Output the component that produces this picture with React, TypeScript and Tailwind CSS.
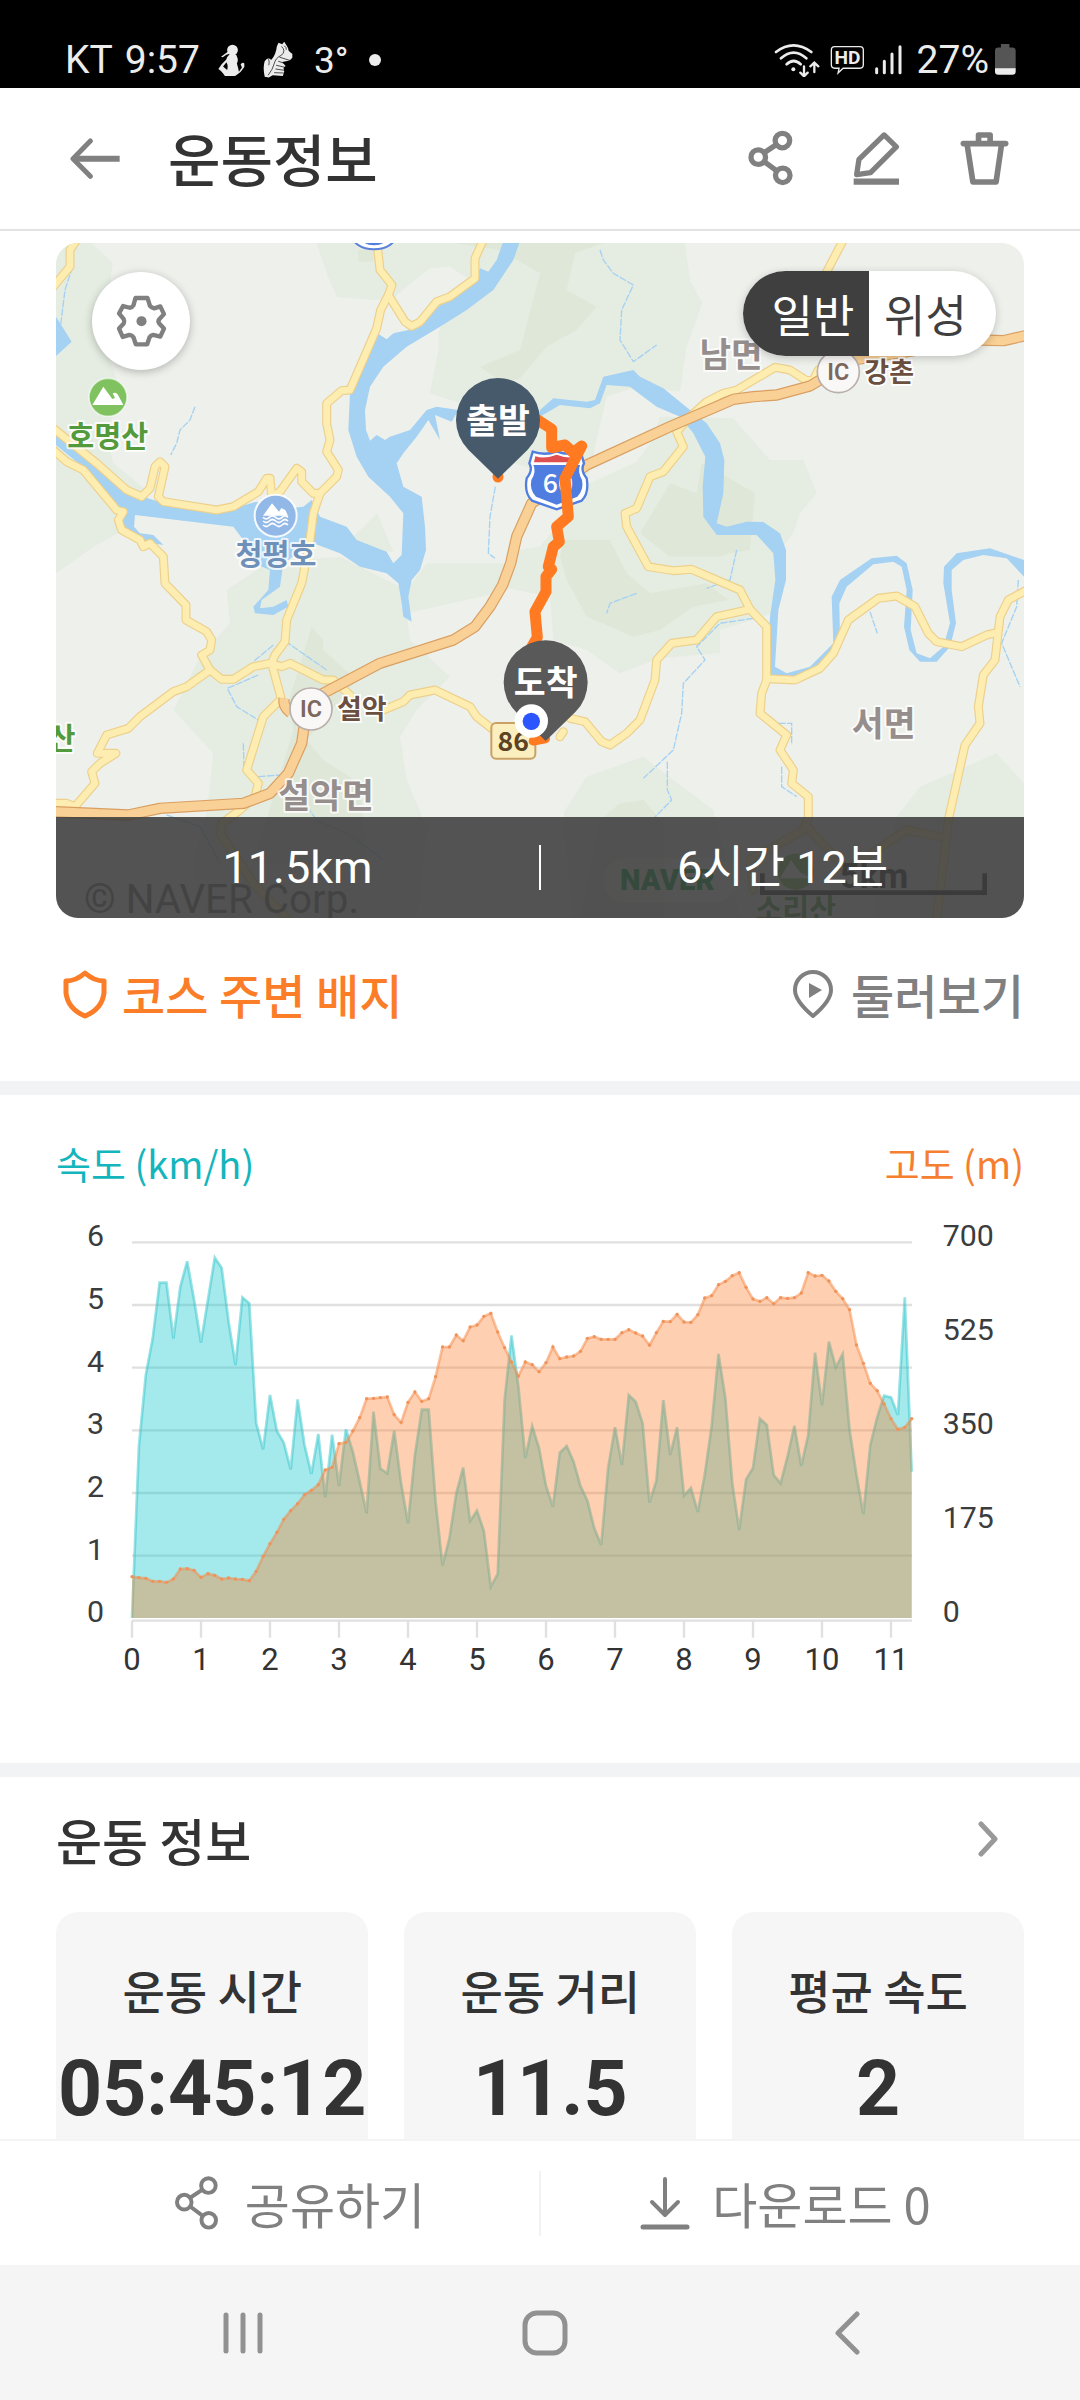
import React from "react";

const KR = "font-['Noto_Sans_CJK_KR',sans-serif]";
const ROBOTO = "font-['Roboto','Noto_Sans_CJK_KR',sans-serif]";

/* ---------- icons ---------- */

function ShareIcon({ className, width = 14 }: { className: string; width?: number }) {
  return (
    <svg viewBox="-2 -1 136 170" className={className} fill="none" stroke="currentColor" strokeWidth={width} aria-hidden="true">
      <circle cx="29" cy="81" r="22" />
      <circle cx="102" cy="31" r="22" />
      <circle cx="103" cy="136" r="22" />
      <path d="M48 67 84 43M48 95l36 27" />
    </svg>
  );
}

function BackArrow() {
  return (
    <svg viewBox="0 0 150 124" className="w-[50px]" fill="none" stroke="currentColor" strokeWidth="15" aria-hidden="true">
      <path d="M149 62H10" strokeWidth="18" />
      <path d="M61 9 9 62l52 53" strokeLinecap="round" strokeLinejoin="round" />
    </svg>
  );
}

function EditIcon() {
  return (
    <svg viewBox="372 320 142 166" className="w-[47px]" fill="none" stroke="currentColor" strokeWidth="16" strokeLinejoin="round" aria-hidden="true">
      <path d="M466 332 503 368 425 446 383 452 390 406Z" />
      <path d="M374 473H511" strokeWidth="19" />
    </svg>
  );
}

function TrashIcon() {
  return (
    <svg viewBox="690 320 148 166" className="w-[49px]" fill="none" stroke="currentColor" strokeWidth="17" strokeLinejoin="round" aria-hidden="true">
      <path d="M700 358H828" strokeLinecap="round" />
      <path d="M746 356V332H781V356" strokeLinecap="round" />
      <path d="M712 364 729 474H799L815 364" />
    </svg>
  );
}

function GearIcon() {
  return (
    <svg viewBox="226 196 152 156" className="w-[51px]" fill="none" stroke="currentColor" strokeWidth="13" strokeLinejoin="round" aria-hidden="true">
      <path d="M284 205H320L327 228Q332 234 340 236L358 230 369 253 355 268Q350 274 355 281L369 296 358 320 337 315Q330 316 326 322L319 343H285L278 322Q274 316 266 315L246 321 235 296 249 281Q252 274 249 268L235 251 247 229 267 234Q275 233 278 227Z" />
      <circle cx="302" cy="274" r="15" fill="currentColor" stroke="none" />
    </svg>
  );
}

function StatusBar() {
  return (
    <div className={`flex h-[88px] shrink-0 items-center justify-between bg-black pt-[32px] pr-[64px] pl-[65px] text-[39px] leading-none text-[#ececec] ${ROBOTO}`}>
      <div className="flex items-center">
        <span>KT</span>
        <span className="ml-[12px]">9:57</span>
        <svg viewBox="508 60 80 92" className="ml-[18px] w-[27px]" fill="currentColor" aria-hidden="true">
          <circle cx="551" cy="78" r="16" />
          <path d="M517 98 541 80 545 88Q532 90 522 99Z" />
          <path d="M541 92h21l4 10q2 8-2 16 4 14 6 24l9-12-4-10q6-8 11-2v10q-10 16-22 23-16 12-34 6-12-18-21-23 8-14 23-27 3-10 9-15ZM533 114l-10 13 12 10q4-12-2-23Z" fillRule="evenodd" />
        </svg>
        <svg viewBox="643 50 92 112" className="ml-[18px] w-[31px]" fill="currentColor" aria-hidden="true">
          <path d="M684 66 689 55 700 60 706 52 712 62 718 72Q716 80 730 88L730 100 722 108 700 112 710 124 704 130 706 140 702 154 672 152 660 158 648 156Q642 128 648 110 658 96 664 104L668 106Q682 88 684 66Z" />
          <path d="M698 66Q712 80 698 92 680 100 676 118 672 134 658 152M692 98 724 108M688 110l18 6M682 122l26 6M680 133l26 4M676 144l28 1M656 100q8 8 4 22M706 64q8 6 6 12" fill="none" stroke="#000" strokeWidth="2" />
        </svg>
        <span className="ml-[20px] text-[37px]">3°</span>
        <span className="ml-[20px] size-[12px] rounded-full bg-[#ececec]" />
      </div>
      <div className="flex items-center">
        <svg viewBox="132 54 138 104" className="w-[46px]" fill="none" stroke="currentColor" strokeWidth="8" strokeLinecap="round" aria-hidden="true">
          <path d="M138 81q52-40 106 0M153 100q38-34 76 0M170 118q21-20 42 0" />
          <circle cx="190" cy="133" r="6" fill="currentColor" stroke="none" />
          <path d="M222 124v27M211 143l11 11 11-11M253 141v-26M241 124l12-11 12 11" strokeWidth="7" />
        </svg>
        <svg viewBox="302 66 104 88" className="ml-[10px] w-[35px]" aria-hidden="true">
          <path d="M316 71H391Q401 71 401 81V125Q401 135 391 135H341L326 149 329 135H316Q306 135 306 125V81Q306 71 316 71Z" fill="none" stroke="currentColor" strokeWidth="4" />
          <text x="354" y="123" textAnchor="middle" fontSize="57" fontWeight="700" fill="currentColor">HD</text>
        </svg>
        <svg viewBox="430 62 84 90" className="ml-[9px] w-[28px]" stroke="currentColor" strokeWidth="9" strokeLinecap="round" aria-hidden="true">
          <path d="M438 133v12M461 111v34M484 89v56M508 67v78" />
        </svg>
        <span className="ml-[15px]">27%</span>
        <svg viewBox="795 58 64 96" className="ml-[6px] w-[21px]" aria-hidden="true">
          <path d="M813 58h26v11h9q10 0 10 10v55h-63V79q0-10 10-10h8Z" fill="#555" />
          <path d="M795 132h63v10q0 10-10 10h-43q-10 0-10-10Z" fill="#ececec" />
        </svg>
      </div>
    </div>
  );
}

/* ---------- map ---------- */

const yellowRoads = [
  "M110 30 90 60V110L40 170",
  "M1010 30 1020 120 1056 165 1045 195 1022 240 1010 295 930 480 905 482 860 520V580L870 630 860 665 895 720 890 740 840 790 820 850 810 930 785 1060 740 1170 735 1235 705 1275 695 1300 722 1400",
  "M1045 195 1095 275 1115 289 1140 276 1190 215 1230 200 1305 145V85L1330 30",
  "M840 790H820L785 755V725L770 715 720 785 695 800 690 745H680L655 785 580 830 530 840 370 815 355 800 375 710 360 695 345 710 330 775 305 800 260 780 170 700 40 595",
  "M40 660 80 695 130 720 230 840 250 845 235 870 245 900 300 930 310 950 330 940 370 980 375 1060 438 1125V1170L500 1205 515 1230 510 1260 485 1275 510 1320 545 1348H580L640 1310 690 1300 725 1310 750 1300 850 1350H880L930 1395",
  "M510 1320 440 1370 400 1385 300 1460 265 1495 200 1515 172 1570H228L180 1600 155 1625 165 1660 105 1730M40 1720H80L105 1730",
  "M715 1415 670 1460 620 1620 655 1660 645 1700 600 1740 545 1780 540 1810 640 1960 740 2064",
  "M1030 1440 1090 1415 1110 1395 1185 1380 1290 1430 1310 1460 1380 1515",
  "M1560 1520 1570 1505M1590 1465 1635 1475 1685 1535 1710 1545 1760 1510 1800 1470 1845 1350 1850 1290 1895 1240 1970 1230 2030 1160 2130 1138",
  "M2410 30 2355 135M2335 420 2320 450 2300 452 2250 420 2205 412 2090 480 2050 490 2000 515 1950 560 1910 605 1930 650 1870 725 1830 740 1790 835 1755 850 1760 890 1825 1010 1900 1022 1955 1018 2100 1080 2130 1138 2180 1190V1350L2165 1390 2160 1450 2240 1515 2220 1560 2260 1620 2255 1660 2305 1700V1761L2290 1800 2220 1840 2130 1890 2140 1980",
  "M2180 1346 2265 1350 2340 1315 2380 1270 2425 1170 2515 1105 2570 1098 2625 1130 2665 1210 2690 1235 2765 1250 2840 1215 2870 1208",
  "M2960 1080 2905 1110 2880 1160 2865 1290 2830 1335 2815 1430 2820 1480 2775 1545 2725 1770 2710 1900 2690 2064",
  "M2300 1790 2420 1920 2600 1800 2700 1820",
];

const orangeRoads = [
  "M40 1745 265 1755 360 1735 610 1720 690 1690 745 1630 785 1540 795 1470",
  "M752 1448Q728 1430 732 1405",
  "M840 1395 1020 1300 1240 1230 1305 1190 1350 1130 1388 1065 1412 1000 1430 920 1475 820 1640 705 1890 590 2080 508 2140 500 2210 495 2310 468 2440 390 2700 350 2820 330 2890 332 2960 316",
];

const streams =
  "M98 110 75 180 60 300M465 530 450 570 420 600 410 640 392 675M1680 60 1690 90 1720 130 1780 165 1745 240 1740 330 1780 395 1850 345M1366 770 1350 860 1345 970 1365 985M2090 960 2070 1050 2000 1075M1790 1090 1710 1120 1700 1150M2140 1165 2040 1180 1970 1250 1995 1290 1930 1360 1925 1450 1900 1560 1810 1645M1882 1595V1680L1895 1710 1845 1761M860 1320 745 1240M700 1245 640 1295M655 1335 562 1375 590 1430 655 1470M2215 1480H2255V1545M2225 1610 2225 1670 2270 1700M2490 1145 2512 1210M2935 1050 2930 1130 2885 1240 2940 1370M610 1540 612 1620M655 1640 720 1635M800 1730 830 1770 930 1815 1030 1890M380 1755 480 1790 540 1900";

function Pin({ cx, cy, color, label }: { cx: number; cy: number; color: string; label: string }) {
  const left = cx - 89;
  const right = cx + 89;
  return (
    <g>
      <path d={`M${left} ${cy + 89}A126 126 0 1 1 ${right} ${cy + 89}L${cx} ${cy + 176}Z`} fill={color} />
      <text x={cx} y={cy + 38} textAnchor="middle" fontSize="104" fontWeight="700" fill="#fff">{label}</text>
    </g>
  );
}

function Interchange({ x, y, name }: { x: number; y: number; name: string }) {
  return (
    <g>
      <circle cx={x} cy={y} r="63" fill="#faf8f7" stroke="#b9afab" strokeWidth="5" />
      <text x={x} y={y + 25} textAnchor="middle" fontSize="70" fontWeight="600" fill="#7c685e" className={ROBOTO}>IC</text>
      <text x={x + 78} y={y + 31} fontSize="81" fontWeight="700" fill="#6b4f3f" stroke="#fff" strokeWidth="10" paintOrder="stroke">{name}</text>
    </g>
  );
}

function MapView() {
  return (
    <svg viewBox="48 39 2904 2025" className={`block w-full ${KR}`} role="img" aria-label="운동 경로 지도">
      <rect x="48" y="39" width="2904" height="2025" fill="#eef0eb" />
      <g fill="#e5ede2">
        <path d="M48 39H155L218 100 205 200 190 330 240 480 200 620 220 700 330 790 250 900 160 950 48 1030Z" />
        <path d="M830 39 860 130 890 200 1000 210 1060 205 1100 170 1170 115 1230 110 1290 150 1195 305V360L1170 490 1260 520 1420 700 1640 760 1700 500 1790 470 1920 485 1940 350 1987 220 1950 150 1935 39Z" />
        <path d="M1500 950 1650 760 1790 695 1830 640 1860 560 2080 565 2190 690 2290 690 2330 790 2280 850 2260 910 2210 970 2200 1150 2040 1200V1270L1860 1285 1740 1330 1640 1260 1540 1230 1530 1100 1380 1070 1440 960Z" />
        <path d="M560 1080 680 1000 900 980 1100 1080 1160 1000 1400 1000 1370 1090 1100 1150 1110 1230 1230 1340 1130 1440 1080 1520 1100 1650 1160 1790 1130 2064H480L460 1900 500 1750 520 1570 400 1440 480 1280 570 1180Z" />
        <path d="M1012 850 930 930 970 960 1060 965Z" />
        <path d="M1570 1750 1640 1640 1810 1580 1900 1650 2020 1740 2100 2064H1600Z" />
        <path d="M2570 1761 2640 1670 2870 1570 2952 1660V2064H2500Z" />
      </g>
      <g fill="#dfe7d8">
        <path d="M1240 39 1380 60 1500 130 1440 360 1320 410 1390 460 1440 445 1520 350 1610 300 1670 230 1580 180 1605 70 1690 39Z" />
        <path d="M1890 760 1970 790 1985 700 2060 740 2145 790 2130 960 2070 970 2040 980 1890 980 1800 910Z" />
        <path d="M1560 980 1570 930H1710L1760 1030 1830 1090 2000 1060 2065 1110 1960 1130 1860 1200 1780 1220 1640 1160 1580 1050Z" />
        <path d="M815 1190 850 1230V1260L950 1350 800 1530 850 1590 960 1660 980 1900 640 1900 700 1700 760 1500 750 1400Z" />
        <path d="M1680 1770 1740 1720 1810 1710 1870 1780V2064H1620Z" />
        <path d="M955 60H1000V95H955Z" />
      </g>

      <g fill="#a5d1f2">
        <path d="M1388 39 1370 90 1345 125 1320 115 1305 150 1200 225 1130 295 1060 310 1040 328 1012 310 930 490 925 600 950 680 985 740 1050 800 1090 850 1085 975 1060 1000 1040 965 950 930 920 890 840 860 815 810 790 830 700 840 650 815 530 850 370 820 310 800 250 780 170 700 48 590V645L140 720 240 850 255 905 310 935 370 945 340 915 300 910 282 890 285 855 580 890 610 930 640 1000 690 1020 685 1080 640 1130 645 1150 700 1155 745 1130 740 1110 700 1130 660 1135 665 1110 720 1070 730 1000 820 940 900 970 960 1010 1040 1030 1075 1060 1085 1120 1090 1160 1115 1175 1105 1100 1115 1050 1140 1020 1158 960 1155 890 1145 800 1090 770 1070 700 1090 670 1130 620 1165 570 1200 630 1185 555 1235 575 1255 540 1190 530 1160 540 1110 600 1050 620 1035 630 1010 615 990 632 978 600 975 540 990 470 1030 410 1100 350 1200 290 1280 240 1360 180 1420 90 1438 39Z" />
        <path d="M48 260 95 335 48 378Z" />
        <path d="M1500 540 1540 505 1640 515 1665 510 1690 440 1780 420 1800 440 1870 475 1950 540 2000 580 2040 640 2053 690 2050 790 2030 880 2060 890 2120 875 2170 876 2220 910 2238 960V1050L2215 1140 2205 1310 2240 1330 2310 1310 2380 1240 2375 1100 2400 1050 2495 985 2570 977 2600 1000 2618 1080 2612 1200 2630 1270 2670 1285 2710 1250 2730 1180 2710 1060 2712 1010 2750 970 2850 955 2952 990V1040L2900 985 2830 975 2770 990 2735 1020 2735 1080 2748 1180 2730 1250 2690 1295 2640 1295 2608 1260 2592 1190 2600 1080 2585 1010 2560 995 2500 1003 2420 1070 2398 1120 2400 1230 2350 1310 2260 1345 2180 1340 2190 1160 2206 1050 2200 970 2150 915 2030 915 1990 860 1988 770 1996 680 1960 610 1920 560 1850 530 1770 470 1700 465 1680 520 1650 535 1560 525 1500 560Z" />
      </g>
      <path d="M1036 235 1040 320 1085 297Z" fill="#eef0eb" />
      <path d={streams} fill="none" stroke="#a5d1f2" strokeWidth="4" strokeDasharray="22 4" />

      <g fill="none" strokeLinejoin="round">
        <g stroke="#ecd08c" strokeWidth="27" strokeLinecap="round">{yellowRoads.map((d) => <path key={d} d={d} />)}</g>
        <g stroke="#feedb0" strokeWidth="20" strokeLinecap="round">{yellowRoads.map((d) => <path key={d} d={d} />)}</g>
        <g stroke="#d99f62" strokeWidth="34">{orangeRoads.map((d) => <path key={d} d={d} />)}</g>
        <g stroke="#f9d095" strokeWidth="27">{orangeRoads.map((d) => <path key={d} d={d} />)}</g>
      </g>

      <ellipse cx="1002" cy="12" rx="68" ry="46" fill="#fff" stroke="#5a80dc" strokeWidth="6" />
      <ellipse cx="1002" cy="10" rx="48" ry="36" fill="#4f7de0" />

      <g textAnchor="middle" stroke="#fff" strokeOpacity="0.8" strokeLinejoin="round" strokeWidth="12" paintOrder="stroke" fontWeight="700">
        <text x="203" y="652" fontSize="88" fill="#539a3c">호명산</text>
        <text x="66" y="1556" fontSize="88" fill="#539a3c">산</text>
        <text x="708" y="1004" fontSize="88" fill="#6f90b8">청평호</text>
        <text x="2073" y="411" fontSize="103" fill="#958e8c">남면</text>
        <text x="858" y="1733" fontSize="104" fill="#958e8c">설악면</text>
        <text x="2531" y="1517" fontSize="104" fill="#958e8c">서면</text>
        <text x="2267" y="2070" fontSize="88" fill="#539a3c">소리산</text>
      </g>

      <circle cx="204" cy="502" r="57" fill="#7fc25f" stroke="#fff" strokeOpacity="0.6" strokeWidth="5" />
      <path d="M157 525 190 470 217 507 225 504 218 490Q230 484 237 500L250 525Z" fill="#fff" />
      <circle cx="707" cy="857" r="63" fill="#92b8e8" stroke="#fff" strokeOpacity="0.9" strokeWidth="6" />
      <path d="M669 857 696 820 717 845 724 834 736 840 744 857Z" fill="#fff" />
      <path d="M669 862q10 9 19 0t19 0 19 0 18 0M669 873q10 9 19 0t19 0 19 0 18 0M669 885q10 9 19 0t19 0 19 0 18 0" fill="none" stroke="#fff" strokeWidth="5" />

      <Interchange x={813} y={1437} name="설악" />
      <Interchange x={2395} y={425} name="강촌" />

      <g>
        <path d="M1478 665Q1515 678 1550 664 1585 678 1622 665L1632 700Q1620 720 1640 745 1648 790 1625 812L1550 838 1476 812Q1452 790 1460 745 1480 720 1468 700Z" fill="#fff" stroke="#4f7de0" strokeWidth="7" />
        <path d="M1480 705H1620Q1612 725 1626 750 1632 780 1612 800L1550 824 1488 800Q1468 780 1474 750 1490 725 1480 705Z" fill="#4f7de0" />
        <path d="M1482 697 1486 679Q1515 688 1550 674 1585 688 1614 679L1618 697Z" fill="#e04f4f" />
        <text x="1554" y="789" textAnchor="middle" fontSize="80" fontWeight="500" fill="#fff">60</text>
      </g>
      <rect x="1354" y="1479" width="132" height="107" rx="14" fill="#fbefc0" stroke="#caa165" strokeWidth="6" />
      <text x="1420" y="1562" textAnchor="middle" fontSize="80" fontWeight="700" fill="#5c4423">86</text>

      <g fill="none" stroke="#ff7a20" strokeWidth="33" strokeLinecap="round" strokeLinejoin="round">
        <path d="M1490 568 1535 597V653L1575 645 1600 668 1625 648 1575 745 1585 860 1550 890 1558 935 1540 950 1525 1010 1535 1018 1518 1040V1085L1485 1145 1492 1222 1470 1260" />
        <path d="M1480 1533 1516 1526" strokeWidth="28" />
        <path d="M1374 740V741" />
      </g>

      <Pin cx={1374} cy={570} color="#475a6c" label="출발" />
      <Pin cx={1517} cy={1357} color="#595959" label="도착" />
      <circle cx="1474" cy="1473" r="50" fill="#fff" />
      <circle cx="1474" cy="1474" r="26" fill="#2a55ff" />

      <text x="132" y="2048" fontSize="121" fill="#777" className={ROBOTO}>© NAVER Corp.</text>
      <rect x="1690" y="1885" width="400" height="133" rx="66" fill="#fff" fillOpacity="0.6" />
      <text x="1740" y="1980" fontSize="88" fontWeight="900" fill="#03a83c" className={ROBOTO}>NAVER</text>
      <circle cx="2267" cy="1925" r="54" fill="#7fc25f" />
      <path d="M2220 1945 2253 1890 2280 1927 2312 1945Z" fill="#fff" />
      <path d="M2167 1930V1988H2834V1930" fill="none" stroke="#333" strokeWidth="14" />
      <text x="2502" y="1975" textAnchor="middle" fontSize="104" fontWeight="700" fill="#333" className={ROBOTO}>5km</text>
    </svg>
  );
}

/* ---------- chart ---------- */

const speedY = [
  1254, 740, 525, 415, 248, 248, 416, 260, 184, 300, 428, 300, 173, 204, 365, 495, 292, 310, 670, 748, 585, 693, 728, 808, 598,
  735, 822, 702, 892, 704, 858, 688, 755, 845, 940, 635, 806, 820, 692, 850, 970, 765, 629, 629, 905, 1096, 1015, 880, 803, 963,
  932, 993, 1160, 1122, 600, 406, 560, 774, 678, 745, 858, 920, 758, 738, 785, 858, 902, 985, 1035, 805, 682, 795, 585, 605, 670,
  908, 842, 600, 765, 682, 887, 864, 936, 825, 680, 462, 595, 850, 990, 838, 804, 656, 675, 825, 850, 770, 677, 798, 705, 458,
  616, 425, 502, 462, 690, 825, 942, 735, 652, 587, 592, 645, 292, 815,
];

const altitudeY = [
  1130, 1133, 1135, 1144, 1144, 1147, 1137, 1107, 1106, 1111, 1132, 1121, 1126, 1137, 1134, 1137, 1138, 1142, 1114, 1069, 1031,
  997, 958, 932, 911, 884, 871, 854, 810, 802, 731, 727, 693, 653, 596, 595, 593, 591, 644, 667, 607, 576, 604, 596, 530, 441,
  441, 405, 422, 381, 375, 349, 340, 396, 443, 486, 528, 486, 494, 515, 488, 441, 476, 471, 468, 454, 415, 410, 418, 418, 418,
  398, 389, 399, 408, 435, 398, 364, 365, 343, 366, 367, 344, 294, 287, 254, 244, 227, 218, 262, 297, 304, 293, 311, 293, 295,
  293, 279, 218, 228, 226, 243, 274, 296, 329, 435, 490, 550, 572, 612, 656, 688, 682, 656,
];

const X0 = 276;
const X_END = 2616;
const STEP = 207;
const BASE = 1254;

const pointX = (i: number) => X0 + (i * STEP) / 10;
const toLine = (ys: number[]) => ys.map((y, i) => `${pointX(i).toFixed(1)},${y}`).join(" ");
const toArea = (ys: number[]) => `${X0},${BASE} ${toLine(ys)} ${pointX(ys.length - 1).toFixed(1)},${BASE}`;

function Chart() {
  return (
    <svg viewBox="48 30 2904 1440" className={`mt-[23px] block w-full ${ROBOTO}`} role="img" aria-label="속도와 고도 그래프">
      <g stroke="#e0e0e0" strokeWidth="7">
        {[0, 1, 2, 3, 4, 5].map((i) => <path key={i} d={`M${X0} ${127 + i * 188}H${X_END}`} />)}
        <path d={`M${X0} 1262H${X_END}`} />
        {Array.from({ length: 12 }, (_, i) => <path key={i} d={`M${X0 + i * STEP} 1262V1313`} />)}
      </g>
      <polygon points={toArea(speedY)} fill="#1cc9cd" fillOpacity="0.4" />
      <polyline points={toLine(speedY)} fill="none" stroke="#33c6cb" strokeOpacity="0.5" strokeWidth="8" />
      <polygon points={toArea(altitudeY)} fill="#fc7923" fillOpacity="0.36" />
      <polyline points={toLine(altitudeY)} fill="none" stroke="#f58a48" strokeOpacity="0.5" strokeWidth="8" />
      <g fill="#f0935a">
        {altitudeY.map((y, i) => <circle key={i} cx={pointX(i)} cy={y} r="5" />)}
      </g>
      <g fill="#3a3c3e" fontSize="91">
        {[6, 5, 4, 3, 2, 1, 0].map((n, i) => <text key={n} x="192" y={139 + i * 188} textAnchor="end">{n}</text>)}
        {[700, 525, 350, 175, 0].map((n, i) => <text key={n} x="2708" y={137 + i * 282}>{n}</text>)}
      </g>
      <g fill="#333" fontSize="93">
        {Array.from({ length: 12 }, (_, i) => <text key={i} x={X0 + i * STEP} y="1411" textAnchor="middle">{i}</text>)}
      </g>
    </svg>
  );
}

/* ---------- page ---------- */

function StatCard({ label, value }: { label: string; value: string }) {
  return (
    <div className="flex h-[300px] flex-1 flex-col items-center rounded-[22px] bg-[#f6f6f6] px-[2px] pt-[47px] text-[#333]">
      <dt className="text-[46px] leading-[60px] font-medium whitespace-nowrap">{label}</dt>
      <dd className={`mt-[30px] text-[77px] leading-[80px] font-bold ${ROBOTO}`}>{value}</dd>
    </div>
  );
}

export default function App() {
  return (
    <div className={`flex h-screen flex-col overflow-hidden bg-white ${KR}`}>
      <StatusBar />

      <header className="flex h-[143px] shrink-0 items-center border-b-2 border-[#e3e3e3] pr-[71px] pl-[70px] text-[#808080]">
        <button type="button" aria-label="뒤로"><BackArrow /></button>
        <h1 className="ml-[48px] pb-[4px] text-[57px] leading-[72px] font-medium text-[#333]">운동정보</h1>
        <div className="ml-auto flex items-center gap-[60px]">
          <button type="button" aria-label="공유"><ShareIcon className="w-[45px]" width={16} /></button>
          <button type="button" aria-label="편집"><EditIcon /></button>
          <button type="button" aria-label="삭제"><TrashIcon /></button>
        </div>
      </header>

      <main className="min-h-0 flex-1 overflow-hidden">
        <section className="px-[56px] pt-[12px] pb-[57px]">
          <div className="relative overflow-hidden rounded-[22px]">
            <MapView />
            <button type="button" aria-label="지도 설정" className="absolute top-[29px] left-[36px] grid size-[98px] place-items-center rounded-full bg-white text-[#808080] shadow-[0_2px_8px_rgba(0,0,0,0.25)]">
              <GearIcon />
            </button>
            <div className="absolute top-[28px] right-[28px] flex h-[85px] overflow-hidden rounded-full bg-white text-[45px] leading-[80px] shadow-[0_2px_8px_rgba(0,0,0,0.2)]">
              <button type="button" aria-pressed="true" className="w-[126px] bg-[#3f3f3f] pl-[14px] text-white">일반</button>
              <button type="button" aria-pressed="false" className="w-[127px] pr-[14px] text-[#3f3f3f]">위성</button>
            </div>
            <div className={`absolute inset-x-0 bottom-0 flex h-[101px] items-center bg-[#3c3c3c]/88 text-[45px] leading-[60px] text-white ${ROBOTO}`}>
              <span className="flex-1 text-center">11.5km</span>
              <span className="h-[45px] w-[2px] bg-white" />
              <span className="flex-1 text-center">6시간 12분</span>
            </div>
          </div>

          <div className="mt-[46px] flex items-center justify-between text-[47px] leading-[60px] font-medium">
            <button type="button" className="flex items-center pl-[6px] text-[#fb7d27]">
              <svg viewBox="0 0 46 50" className="mr-[14px] w-[46px]" fill="none" stroke="currentColor" strokeWidth="5" strokeLinejoin="round" aria-hidden="true">
                <path d="M23 4Q32 12 42 12V24Q40 40 23 47 6 40 4 24V12Q14 12 23 4Z" />
              </svg>
              코스 주변 배지
            </button>
            <button type="button" className="flex items-center text-[#808080]">
              <svg viewBox="0 0 42 50" className="mr-[17px] w-[42px]" fill="none" stroke="currentColor" strokeWidth="4" strokeLinejoin="round" aria-hidden="true">
                <path d="M21 47Q3 32 3 21A18 18 0 0 1 39 21Q39 32 21 47Z" />
                <path d="M17 14v15l13-8Z" fill="currentColor" stroke="none" />
              </svg>
              둘러보기
            </button>
          </div>
        </section>

        <section className="border-t-[14px] border-[#f1f3f5] px-[56px] pt-[44px] pb-[73px]">
          <div className="flex justify-between text-[38px] leading-[48px]">
            <h2 className="text-[#14b5bd]">속도 (km/h)</h2>
            <h2 className="text-[#f57f31]">고도 (m)</h2>
          </div>
          <Chart />
        </section>

        <section className="border-t-[14px] border-[#f1f3f5] px-[56px] pt-[32px]">
          <div className="flex items-center justify-between pr-[25px]">
            <h2 className="text-[50px] leading-[60px] font-medium text-[#333]">운동 정보</h2>
            <button type="button" aria-label="더보기" className="text-[#999]">
              <svg viewBox="0 0 22 36" className="w-[22px]" fill="none" stroke="currentColor" strokeWidth="5" strokeLinecap="round" strokeLinejoin="round" aria-hidden="true">
                <path d="M4 3 18 18 4 33" />
              </svg>
            </button>
          </div>
          <dl className="mt-[43px] flex gap-[36px]">
            <StatCard label="운동 시간" value="05:45:12" />
            <StatCard label="운동 거리" value="11.5" />
            <StatCard label="평균 속도" value="2" />
          </dl>
        </section>
      </main>

      <footer className="relative flex h-[126px] shrink-0 items-center border-t-2 border-[#f4f4f4] text-[49px] leading-[60px] text-[#808080]">
        <button type="button" className="flex w-1/2 items-center justify-center gap-[26px] pl-[60px]">
          <ShareIcon className="w-[45px]" width={12} />
          공유하기
        </button>
        <span className="h-[65px] w-[2px] bg-[#f2f2f2]" />
        <button type="button" className="flex w-1/2 items-center justify-center gap-[22px] pr-[50px]">
          <svg viewBox="0 0 50 54" className="w-[50px]" fill="none" stroke="currentColor" strokeWidth="4" strokeLinecap="round" strokeLinejoin="round" aria-hidden="true">
            <path d="M25 3V38M12 26 25 39 38 26" />
            <path d="M3 51H47" strokeWidth="5" />
          </svg>
          다운로드 0
        </button>
      </footer>

      <nav className="grid h-[135px] shrink-0 grid-cols-3 place-items-center bg-[#f5f5f5] pr-[82px] pl-[92px] text-[#919191]">
        <button type="button" aria-label="최근 앱">
          <svg viewBox="0 0 42 44" className="w-[42px]" stroke="currentColor" strokeWidth="5" strokeLinecap="round" aria-hidden="true">
            <path d="M4 4V40M21 4V40M38 4V40" />
          </svg>
        </button>
        <button type="button" aria-label="홈">
          <svg viewBox="0 0 48 48" className="w-[48px]" fill="none" stroke="currentColor" strokeWidth="5" aria-hidden="true">
            <rect x="4" y="4" width="40" height="40" rx="12" />
          </svg>
        </button>
        <button type="button" aria-label="뒤로 가기">
          <svg viewBox="0 0 26 44" className="w-[26px]" fill="none" stroke="currentColor" strokeWidth="5" strokeLinecap="round" strokeLinejoin="round" aria-hidden="true">
            <path d="M23 3 4 22 23 41" />
          </svg>
        </button>
      </nav>
    </div>
  );
}
